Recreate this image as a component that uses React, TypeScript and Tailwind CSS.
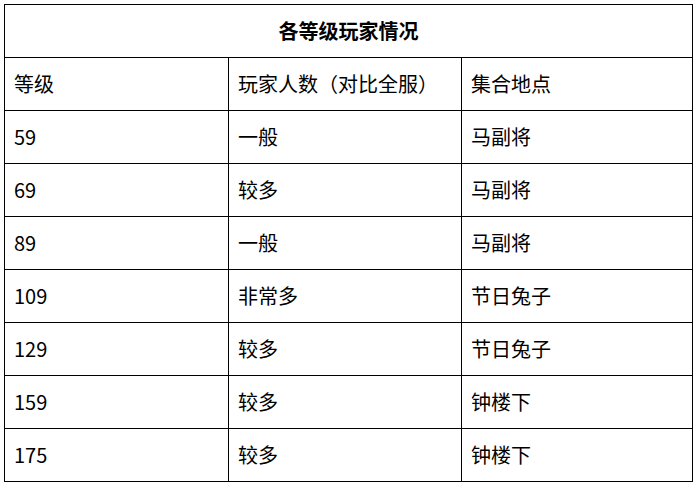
const rows = [
  { level: "59", count: "一般", place: "马副将" },
  { level: "69", count: "较多", place: "马副将" },
  { level: "89", count: "一般", place: "马副将" },
  { level: "109", count: "非常多", place: "节日兔子" },
  { level: "129", count: "较多", place: "节日兔子" },
  { level: "159", count: "较多", place: "钟楼下" },
  { level: "175", count: "较多", place: "钟楼下" },
];

const cell = "border border-black h-[53px] pl-[9px] text-left align-middle font-normal";

export default function App() {
  return (
    <div
      className="w-[700px] h-[486px] bg-white pt-[4px] pl-[4px] text-black text-[20px]"
      style={{ fontFamily: '"Microsoft YaHei", "Noto Sans CJK SC", sans-serif' }}
    >
      <table className="border-collapse w-[688px] table-fixed">
        <colgroup>
          <col className="w-[224px]" />
          <col className="w-[233px]" />
          <col className="w-[231px]" />
        </colgroup>
        <thead>
          <tr>
            <th colSpan={3} className="border border-black h-[53px] text-center align-middle font-bold">
              各等级玩家情况
            </th>
          </tr>
          <tr>
            <th className={cell}>等级</th>
            <th className={cell}>玩家人数（对比全服）</th>
            <th className={cell}>集合地点</th>
          </tr>
        </thead>
        <tbody>
          {rows.map((r) => (
            <tr key={r.level}>
              <td className={cell}>{r.level}</td>
              <td className={cell}>{r.count}</td>
              <td className={cell}>{r.place}</td>
            </tr>
          ))}
        </tbody>
      </table>
    </div>
  );
}
